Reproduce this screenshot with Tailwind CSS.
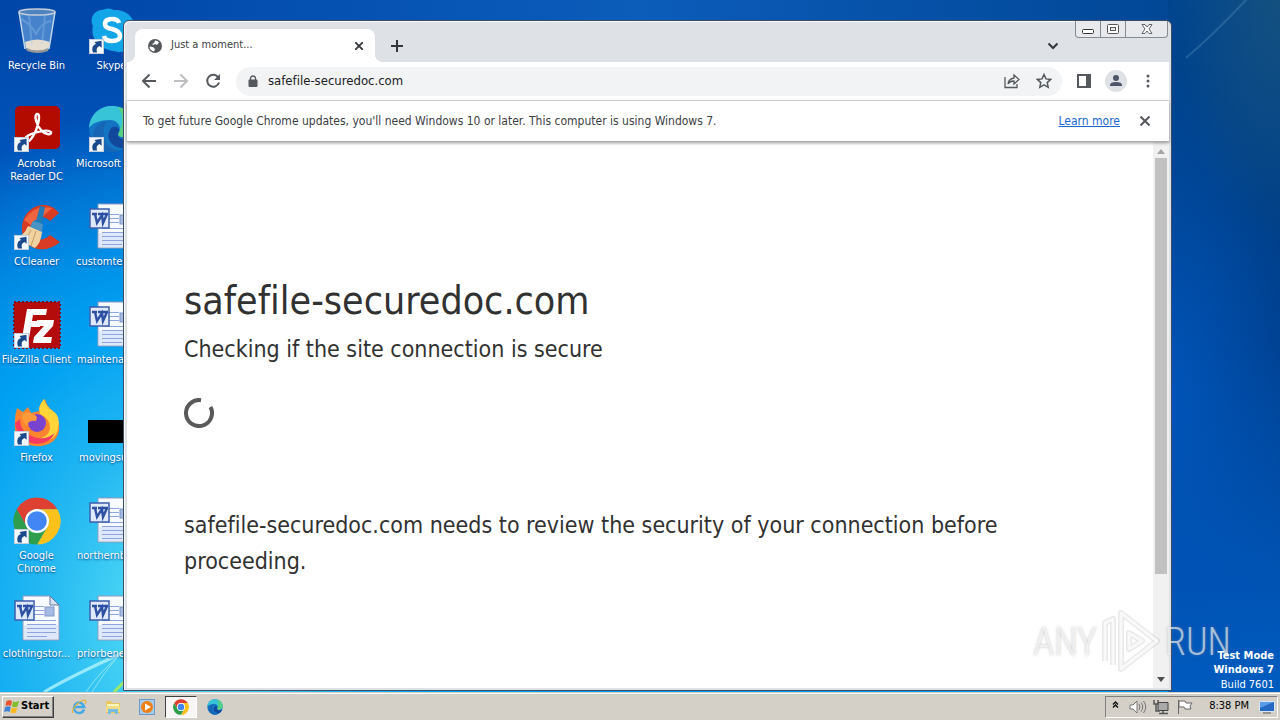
<!DOCTYPE html>
<html lang="en">
<head>
    <meta charset="UTF-8">
    <meta name="viewport" content="width=device-width, initial-scale=1.0">
    <title>Desktop</title>
    <script src="https://cdn.jsdelivr.net/npm/@tailwindcss/browser@4"></script>
</head>
<body class="h-screen flex flex-col overflow-hidden font-['DejaVu_Sans_Condensed','DejaVu_Sans',sans-serif] text-[11px] [font-variant-ligatures:none]">

    <!-- Shared icon shapes -->
    <svg class="hidden" aria-hidden="true">
        <symbol id="shortcut" viewBox="0 0 15 15">
            <rect x=".5" y=".5" width="14" height="14" fill="#f4f8ff" stroke="#c3cfdf"/>
            <path d="M4 13.500C2.500 9.500 3.500 6 7 5L5.500 3l7-1.200.2 7-2.200-1.700C8 8 7 10 8 13.500z" fill="#1b4a8c"/>
        </symbol>
        <symbol id="chrome" viewBox="0 0 48 48">
            <path d="M3.600 12.250A23.500 23.500 0 0 1 44.400 12.250H24A11.750 11.750 0 0 0 13.800 29.900z" fill="#de4032"/>
            <path d="M44.400 12.250A23.500 23.500 0 0 1 24 47.500L34.200 29.900A11.750 11.750 0 0 0 24 12.250z" fill="#fcc21b"/>
            <path d="M24 47.500A23.500 23.500 0 0 1 3.600 12.250L13.800 29.900A11.750 11.750 0 0 0 34.200 29.900z" fill="#2f9e4c"/>
            <circle cx="24" cy="24" r="12" fill="#fff"/>
            <circle cx="24" cy="24" r="9.800" fill="#4285f4"/>
        </symbol>
        <symbol id="edge" viewBox="0 0 48 48">
            <circle cx="24" cy="24" r="23" fill="#1474c4"/>
            <path d="M1 23C2 9 12 1 24 1c14 0 23 10 23 20 0 7-5 11-11 11-5 0-7-2-5-5 3-6-2-12-9-12C12 15 4 18 1 23z" fill="#38c4d8"/>
            <path d="M30 2c11 3 17 11 17 19 0 7-5 11-11 11-5 0-7-2-5-5 5-9 4-17-1-25z" fill="#55d080"/>
            <path d="M16 24c-3 12 6 21 16 22-10 3-21-1-26-11C3 27 8 17 20 16c-3 2-4 5-4 8z" fill="#1765b5"/>
            <path d="M31 27c-3 4 1 8 7 7 4 0 6-1 8-3-2 6-7 11-12 12-9 0-17-9-12-18 2-4 5-4 7-3 2 1 3 3 2 5z" fill="#12489c"/>
        </symbol>
        <symbol id="word" viewBox="0 0 48 48">
            <path d="M10 1h27l9 9v35H10z" fill="#f7faff" stroke="#8d9cbd"/>
            <path d="M11 30h34v14H11z" fill="#dfe7fb"/>
            <path d="M37 1v9h9z" fill="#d5dff2" stroke="#66779c"/>
            <path d="M20 11.500h11M20 15.500h11M20 19.500h11M14 25.500h29M14 29.500h29M14 33.500h29M14 37.500h29M14 41.500h20" stroke="#8ea4dc"/>
            <rect x="32" y="12" width="9" height="9" fill="#a5bbe4" stroke="#8097ca"/>
            <rect x="2" y="6" width="19" height="19" fill="#dfe9fb" stroke="#3b5eae" stroke-width="1.500"/>
            <path d="M4 11h5M10 11h4M15 11h5M7 11l2 9 5-8 1 8 4-9" fill="none" stroke="#2d50a5" stroke-width="2.400"/>
        </symbol>
    </svg>

    <main class="relative flex-1 overflow-hidden text-white bg-[radial-gradient(ellipse_420px_520px_at_190px_620px,#62e8f6_0%,#25b9f2_35%,#00a0f2_60%,transparent_100%),linear-gradient(to_bottom,#0045a6_0%,#0052b8_20%,#0074d6_45%,#0092e8_70%,#009cf0_100%)]">
        <div class="absolute top-0 inset-x-0 h-6 bg-linear-to-r from-[#0045a8] via-[#0c5cba] to-[#00438f]"></div>
        <div class="absolute inset-y-0 right-0 w-[112px] bg-[radial-gradient(ellipse_110px_240px_at_100%_0%,#14507f_0%,transparent_100%),radial-gradient(ellipse_130px_330px_at_0%_400px,#0054b8_0%,transparent_100%),linear-gradient(to_bottom,#00458f_0%,#003f88_30%,#00408f_50%,#0050ae_78%,#005cc0_100%)]"></div>
        <svg class="absolute bottom-0 left-0 w-36 h-32" viewBox="0 0 144 128" fill="none">
            <path d="M44 128Q84 105 144 80" stroke="#baf7ff" stroke-width="3" opacity=".75"/>
            <path d="M86 128Q99 108 124 88M92 128Q103 110 118 92" stroke="#9deaf2" opacity=".8"/>
            <path d="M114 128L128 114" stroke="#9be86c" stroke-width="3"/>
        </svg>
        <svg class="absolute top-0 right-0 w-[108px] h-24" viewBox="0 0 108 96">
            <path d="M74 0Q42 34 14 58" fill="none" stroke="#5b91bd" stroke-width="2" opacity=".35"/>
        </svg>

        <!-- Desktop icons -->
        <div class="relative grid grid-flow-col grid-rows-[repeat(7,98px)] auto-cols-[75px] w-[150px] pt-[7px] leading-[13px] [&>button]:flex [&>button]:flex-col [&>button]:gap-1 [&_svg]:size-12 [&_svg]:shrink-0 [&_svg]:mx-[13px] [&_span]:w-[73px] [&_span]:whitespace-nowrap [&_span]:[text-shadow:0_1px_2px_#003b80]">
            <button>
                <svg viewBox="0 0 48 48">
                    <path d="M6 4l6 38q12 6 24 0l6-38z" fill="#80b4e8" opacity=".55"/>
                    <path d="M12 35q12-5 25 0l-1 6q-12 6-23 0z" fill="#e5ddd0"/>
                    <path d="M13 41q11 5 23 0l-1 3q-10 4-21 0z" fill="#979895"/>
                    <path d="M16 8l3 30M32 8l-3 29M8 12q10 5 15 15 6-12 15-13" stroke="#a7cbed" stroke-width="2" fill="none" opacity=".3"/>
                    <path d="M6 5l6 37M42 5l-6 37" stroke="#bed7ec" stroke-width="1.500"/>
                    <ellipse cx="24" cy="5" rx="18" ry="3" fill="#4f83bf" stroke="#c4ceda" stroke-width="1.500"/>
                </svg>
                <span>Recycle Bin</span>
            </button>
            <button>
                <svg viewBox="0 0 48 48">
                    <rect x="2" y="1" width="45" height="43" rx="5" fill="#b30b00"/>
                    <path d="M12 34c1-5 22-11 26-7 1 4-7 2-10-2-5-5-7-15-4-16 5-1 0 18-6 25-3 4-7 4-6 0z" fill="none" stroke="#fff" stroke-width="2.400"/>
                    <use href="#shortcut" x="1" y="32" width="15" height="15"/>
                </svg>
                <span class="whitespace-normal!">Acrobat Reader DC</span>
            </button>
            <button>
                <svg viewBox="0 0 48 48">
                    <path d="M46 10l-9 8c-8-8-18-3-18 7 0 12 10 15 18 7l10 7C31 53 9 46 9 26 9 3 34-6 46 10z" fill="#d83b24"/>
                    <path d="M11 17Q21 1 39 5L27 16q-8 1-9 6z" fill="#ef6540"/>
                    <path d="M27 3l5 1-4 20-6-2z" fill="#217bb8"/>
                    <path d="M20 18l10 3-1 9-13-4z" fill="#4794c4"/>
                    <path d="M15 23l14 6q-1 11-7 16L2 35q9-2 13-12z" fill="#f0d2a0"/>
                    <path d="M18 27l-7 13M23 28l-5 15" stroke="#ca9a61"/>
                    <use href="#shortcut" x="1" y="32" width="15" height="15"/>
                </svg>
                <span>CCleaner</span>
            </button>
            <button>
                <svg viewBox="0 0 48 48">
                    <rect x="1" y="1" width="46" height="46" fill="#b40b0b"/>
                    <rect x="1" y="1" width="46" height="46" fill="none" stroke="#7d1020" stroke-width="2" stroke-dasharray="2 2"/>
                    <path d="M14 8h20l-1 6H20l-1 6h9l-1 6h-9l-2 11H9zM24 19h17l-1 6-10 11h9l-1 6H20l1-6 10-11h-8z" fill="#fff"/>
                    <use href="#shortcut" x="1" y="32" width="15" height="15"/>
                </svg>
                <span>FileZilla Client</span>
            </button>
            <button>
                <svg viewBox="0 0 48 48">
                    <path d="M4 9l6 4 5-5 3 6 8-2q0-7 6-12 2 8 8 12l2 4q5 7 4 15c-2 22-42 21-44 0Q1 18 4 9z" fill="#ff8430"/>
                    <path d="M31 0q-7 8-4 15 11 5 10 15-2 9-14 10 19 5 22-10 3-13-5-18-7-4-9-12z" fill="#ffd53a"/>
                    <path d="M2 24q2 19 22 21 12 0 18-11-13 10-27 1Q7 31 7 20z" fill="#f53b62"/>
                    <circle cx="24" cy="24" r="9" fill="#7843cf"/>
                    <path d="M9 14q10-2 15 4l-1 4q-8-1-9 5-6-5-5-13z" fill="#ff9a39"/>
                    <use href="#shortcut" x="1" y="32" width="15" height="15"/>
                </svg>
                <span>Firefox</span>
            </button>
            <button>
                <svg viewBox="0 0 48 48">
                    <use href="#chrome" width="48" height="48"/>
                    <use href="#shortcut" x="1" y="32" width="15" height="15"/>
                </svg>
                <span class="whitespace-normal!">Google Chrome</span>
            </button>
            <button>
                <svg><use href="#word"/></svg>
                <span>clothingstor...</span>
            </button>

            <button>
                <svg viewBox="0 0 48 48">
                    <path d="M14 3q7-3 12 0C44 2 52 20 45 33c-2 13-14 13-18 11C10 43 2 29 5 19 1 12 6 3 14 3z" fill="#12a5e8"/>
                    <path d="M31 16q-1-4-7-4-7 0-7 5 0 4 7 5 8 2 8 7 0 5-8 5-7 0-8-5" fill="none" stroke="#fff" stroke-width="4.500"/>
                    <use href="#shortcut" x="1" y="32" width="15" height="15"/>
                </svg>
                <span>Skype</span>
            </button>
            <button class="text-left">
                <svg viewBox="0 0 48 48">
                    <use href="#edge" width="48" height="48"/>
                    <use href="#shortcut" x="1" y="32" width="15" height="15"/>
                </svg>
                <span class="pl-px">Microsoft</span>
            </button>
            <button class="text-left"><svg><use href="#word"/></svg><span class="pl-px">customtes</span></button>
            <button class="text-left"><svg><use href="#word"/></svg><span class="pl-0.5">maintenan</span></button>
            <button class="text-left">
                <svg viewBox="0 0 48 48"><path d="M0 21h48v23H0z"/></svg>
                <span class="pl-1">movingsu</span>
            </button>
            <button class="text-left"><svg><use href="#word"/></svg><span class="pl-0.5">northernb</span></button>
            <button class="text-left"><svg><use href="#word"/></svg><span class="pl-0.5">priorbene</span></button>
        </div>

        <!-- Browser window -->
        <section class="absolute left-[123px] right-[108px] top-5 bottom-px flex flex-col rounded-t-md border border-[#3b4e66] bg-[#dee1e6] pr-0.5 pl-[3px] pb-0.5 text-[#3c4043] shadow-[inset_1px_1px_0_#f7f8fa]">
            <header class="flex h-[41px] shrink-0 items-end pl-2">
                <div class="relative flex h-[33px] w-60 items-center rounded-t-lg bg-white px-3 before:absolute before:bottom-0 before:-left-2 before:size-2 before:bg-[radial-gradient(circle_at_0_0,transparent_8px,white_8px)] after:absolute after:bottom-0 after:-right-2 after:size-2 after:bg-[radial-gradient(circle_at_100%_0,transparent_8px,white_8px)]">
                    <svg class="size-4" viewBox="0 0 16 16">
                        <circle cx="8" cy="8" r="7" fill="#55595e"/>
                        <path d="M2.500 8.500l3.500.5 2 2-1 2.500C4 13 2.500 11 2.500 8.500zM8 2.500q3 0 4 2L10 7 8 6 6.500 7 5 6l2-1z" fill="#fff"/>
                    </svg>
                    <span class="ml-2 flex-1 text-[11px]">Just a moment...</span>
                    <button aria-label="Close tab"><svg class="size-2" viewBox="0 0 8 8"><path d="M0 0l8 8M8 0L0 8" stroke="#34373b" stroke-width="1.800"/></svg></button>
                </div>
                <button aria-label="New tab" class="mb-2.5 ml-4"><svg class="size-3" viewBox="0 0 12 12"><path d="M6 0v12M0 6h12" stroke="#34373b" stroke-width="2"/></svg></button>
                <button aria-label="Search tabs" class="mb-3 ml-auto mr-[17px]"><svg class="h-2 w-2.5" viewBox="0 0 10 8"><path d="M.5 1.500L5 6l4.500-4.500" fill="none" stroke="#34373b" stroke-width="2"/></svg></button>
                <div class="mr-px flex h-[17px] self-start rounded-b-sm border border-t-0 border-[#858a93] bg-[#e7e9ed] [&>button]:flex [&>button]:items-center [&>button]:justify-center">
                    <button aria-label="Minimize" class="w-[25px] border-r border-[#858a93]"><svg class="h-3 w-3" viewBox="0 0 12 12"><rect x=".5" y="6.500" width="11" height="4" rx="1" fill="#fff" stroke="#333"/></svg></button>
                    <button aria-label="Maximize" class="w-[25px] border-r border-[#858a93]"><svg class="h-3 w-3" viewBox="0 0 12 12"><rect x=".5" y="1.500" width="11" height="9" rx="1" fill="#fff" stroke="#555"/><rect x="3.500" y="4.500" width="5" height="3" fill="#e7e9ed" stroke="#555"/></svg></button>
                    <button aria-label="Close" class="w-[41px]"><svg class="h-3 w-3" viewBox="0 0 12 12"><path d="M1 1.500h3l2 2.500 2-2.500h3L8 6l3 4.500H8L6 8l-2 2.500H1L4 6z" fill="#fff" stroke="#606570"/></svg></button>
                </div>
            </header>

            <div class="flex h-[39px] shrink-0 items-center border-b border-[#d5d8dc] bg-white pr-[18px] pl-3.5">
                <div class="flex gap-4 [&_svg]:size-4">
                    <button aria-label="Back"><svg viewBox="0 0 16 16" fill="none" stroke="#55595e" stroke-width="2"><path d="M15 8H2M8.500 1.500L2 8l6.500 6.500"/></svg></button>
                    <button aria-label="Forward"><svg viewBox="0 0 16 16" fill="none" stroke="#bcbec1" stroke-width="2"><path d="M1 8h13M7.500 1.500L14 8l-6.500 6.500"/></svg></button>
                    <button aria-label="Reload"><svg viewBox="0 0 16 16"><path d="M13.300 4.500A6 6 0 1 0 14 9.500" fill="none" stroke="#55595e" stroke-width="2"/><path d="M15 1v6H9z" fill="#55595e"/></svg></button>
                </div>
                <div class="ml-[15px] flex h-[29px] flex-1 items-center rounded-full bg-[#f1f3f4] pr-2.5 pl-3">
                    <svg class="h-3 w-2.5" viewBox="0 0 10 12"><rect x=".5" y="4.500" width="9" height="7.500" rx="1" fill="#55595e"/><path d="M2.500 5V3.500a2.500 2.500 0 0 1 5 0V5" fill="none" stroke="#55595e" stroke-width="1.400"/></svg>
                    <input type="text" aria-label="Address" value="safefile-securedoc.com" class="ml-2.5 min-w-0 flex-1 bg-transparent text-[13px] text-[#202124] outline-none">
                    <button aria-label="Share"><svg class="size-4" viewBox="0 0 16 16" fill="none" stroke="#55595e" stroke-width="1.300"><path d="M1 4v10.500h12V11M4 11q.5-5 6-6V2l5 4.500L10 11V8q-4-.2-6 3z"/></svg></button>
                    <button aria-label="Bookmark" class="ml-4"><svg class="size-4" viewBox="0 0 16 16"><path d="M8 1.500l2 4.400 4.700.5-3.500 3.200 1 4.700L8 11.900l-4.200 2.400 1-4.700L1.300 6.400 6 5.900z" fill="none" stroke="#55595e" stroke-width="1.500"/></svg></button>
                </div>
                <button aria-label="Side panel" class="ml-[15px]"><svg class="h-3.5 w-3.5" viewBox="0 0 14 14"><rect x="1" y="1" width="12" height="12" fill="#fff" stroke="#55595e" stroke-width="2"/><path d="M9 1h4v12H9z" fill="#55595e"/></svg></button>
                <button aria-label="Profile" class="ml-3.5"><svg class="size-[22px]" viewBox="0 0 22 22"><circle cx="11" cy="11" r="11" fill="#dee1e6"/><circle cx="11" cy="8" r="3" fill="#4d5667"/><path d="M5 16v-1q0-3 6-3t6 3v1z" fill="#4d5667"/></svg></button>
                <button aria-label="Menu" class="ml-[18px]"><svg class="h-4 w-1.5" viewBox="0 0 6 16" fill="#55595e"><circle cx="3" cy="3" r="1.500"/><circle cx="3" cy="8" r="1.500"/><circle cx="3" cy="13" r="1.500"/></svg></button>
            </div>

            <div class="relative flex h-[41px] shrink-0 items-center border-b border-[#aeb0b3] bg-white px-4 text-[12px] shadow-[0_1px_3px_#0006]">
                <p class="flex-1">To get future Google Chrome updates, you'll need Windows 10 or later. This computer is using Windows 7.</p>
                <a href="#" class="text-[#1a67d2] underline">Learn more</a>
                <button aria-label="Dismiss" class="ml-5 mr-[3px]"><svg class="size-2.5" viewBox="0 0 10 10"><path d="M.5.5l9 9M9.500.5l-9 9" stroke="#55595e" stroke-width="2"/></svg></button>
            </div>

            <div class="flex min-h-0 flex-1 bg-white">
                <article class="flex-1 overflow-hidden pt-[129px] text-[#313131]">
                    <div class="mx-auto max-w-[960px] px-6">
                        <h1 class="text-[39px] leading-[60px]">safefile-securedoc.com</h1>
                        <h2 class="text-[23px] leading-9">Checking if the site connection is secure</h2>
                        <svg class="mt-[31px] size-[30px]" viewBox="0 0 30 30"><path d="M17 2.200A13 13 0 1 0 26.500 9" fill="none" stroke="#595959" stroke-width="4"/></svg>
                        <p class="mt-[79px] text-[23px] leading-9">safefile-securedoc.com needs to review the security of your connection before proceeding.</p>
                    </div>
                </article>
                <div class="flex w-4 shrink-0 flex-col items-center bg-[#f1f1f1]">
                    <svg class="mt-[7px] h-[5px] w-2" viewBox="0 0 8 5"><path d="M0 5l4-5 4 5z" fill="#a3a3a3"/></svg>
                    <div class="mt-1 w-3 basis-[416px] bg-[#c1c1c1]"></div>
                    <svg class="mt-auto mb-1.5 h-[5px] w-2 shrink-0" viewBox="0 0 8 5"><path d="M0 0l4 5 4-5z" fill="#505050"/></svg>
                </div>
            </div>
        </section>

        <!-- Watermark over the window -->
        <div class="absolute right-[49px] bottom-[18px] flex items-center gap-1 font-['Roboto_Condensed_Light','Roboto_Condensed','Open_Sans_Condensed',sans-serif] text-[38px] leading-none text-white/60 [text-shadow:0_0_3px_#8888]">
            <span>ANY</span>
            <svg class="h-16 w-[60px]" viewBox="0 0 60 64" fill="none" stroke-linejoin="round">
                <g stroke="#999" stroke-opacity=".22" stroke-width="6"><path d="M20 3l36 28-36 28zM4 51V13l8-4v46M28 23l13 8-13 8z"/></g>
                <g stroke="#fbfbfb" stroke-opacity=".85" stroke-width="3"><path d="M20 3l36 28-36 28zM4 51V13l8-4v46M28 23l13 8-13 8z"/></g>
            </svg>
            <span>RUN</span>
        </div>
        <div class="absolute right-1.5 bottom-0 text-right leading-[15px]">
            <p class="font-bold leading-[14px]">Test Mode<br>Windows 7</p>
            <p>Build 7601</p>
        </div>
    </main>

    <!-- Taskbar -->
    <footer class="flex h-7 shrink-0 items-center border-t border-[#d4d0c8] bg-[#d4d0c8] px-0.5 text-black shadow-[inset_0_1px_0_#fff]">
        <button class="flex h-[22px] w-[52px] items-center gap-px border border-t-white border-r-[#404040] border-b-[#404040] border-l-white pl-px font-bold shadow-[inset_-1px_-1px_0_#808080]">
            <svg class="size-4 shrink-0" viewBox="0 0 16 16">
                <path d="M2.500 2q3-1.500 5.500 0L7 7Q4 5.500 1.500 7z" fill="#e9522c"/>
                <path d="M9 2.500q3 1 6-.5l-1.500 5.500q-3 1.500-5.500 0z" fill="#7fbd2b"/>
                <path d="M1.200 8q3-1.500 5.500 0l-1 5Q3 11.500 0 13z" fill="#3f83d8"/>
                <path d="M7.500 8.500q3 1.300 5.800 0L12 13.500q-3 1.500-5.500 0z" fill="#fbb91e"/>
            </svg>
            Start
        </button>
        <nav class="ml-[9px] flex items-center gap-0.5 [&>button]:flex [&>button]:h-[22px] [&>button]:w-8 [&>button]:items-center [&>button]:justify-center [&_svg]:size-4">
            <button aria-label="Internet Explorer"><svg viewBox="0 0 16 16" fill="none"><path d="M13 10.500A5.200 5.200 0 1 1 13.200 8H4" stroke="#45a9e3" stroke-width="2.500"/><path d="M2 14C-1 12 7 2 13 1q3 0 1 4" stroke="#e4b43c" stroke-width="1.200"/></svg></button>
            <button aria-label="Explorer"><svg viewBox="0 0 16 16"><path d="M1 2h5l1 2h8v10H1z" fill="#e7c65e"/><path d="M2 5h12v4H2z" fill="#fff4bd"/><path d="M1 7h14v6H1z" fill="#f3dc86"/><path d="M3 10h10v5h-3v-2H6v2H3z" fill="#76bde1"/></svg></button>
            <button aria-label="Media Player"><svg viewBox="0 0 16 16"><rect x=".5" y=".5" width="15" height="15" fill="#a7cbea" stroke="#6c9ac4"/><circle cx="8" cy="8" r="6" fill="#ef8114"/><path d="M6 4.500l6 3.500-6 3.500z" fill="#fff"/></svg></button>
            <button aria-label="Google Chrome" class="border border-t-[#404040] border-r-white border-b-white border-l-[#404040] bg-[#f7f6f4]"><svg><use href="#chrome"/></svg></button>
            <button aria-label="Microsoft Edge"><svg><use href="#edge"/></svg></button>
        </nav>
        <div class="ml-auto flex h-[22px] items-center border border-t-[#808080] border-r-white border-b-white border-l-[#808080] pr-0.5 pl-1.5 [&_svg]:h-4">
            <button aria-label="Show hidden icons"><svg class="w-[7px]" viewBox="0 0 7 16" fill="none" stroke="#111" stroke-width="1.500"><path d="M1 5.500L3.500 3 6 5.500M1 8.500L3.500 6 6 8.500"/></svg></button>
            <svg class="ml-2.5 w-[18px]" viewBox="0 0 18 16" fill="none" stroke="#777"><path d="M1 6h3l4-4v12l-4-4H1z" fill="#fff"/><path d="M10 5q2 3 0 6M12 3.500q3.500 4.500 0 9M14.500 2q4.500 6 0 12"/></svg>
            <svg class="ml-1.5 w-4" viewBox="0 0 16 16" fill="none" stroke="#555"><path d="M5 3.500h10v8H5z" fill="#aaa" stroke="#444"/><path d="M1 1v4h4V1M3 5v7h4M6 14.500h9M10 12v2" stroke-width="1.500"/></svg>
            <svg class="ml-2 w-4" viewBox="0 0 16 16" fill="#fff" stroke="#666"><path d="M1.500 1v14M2 2h6l1 2h6l-2 3 1 3H8L7 8H2z"/></svg>
            <time class="ml-4 whitespace-nowrap">8:38 PM</time>
            <button aria-label="Show desktop" class="ml-2.5"><svg class="w-4" viewBox="0 0 16 16"><path d="M.5 2.500h15v10H.5z" fill="#2469c4" stroke="#d7e5f4"/><path d="M1 3h14L1 9z" fill="#5c9be8"/><path d="M4 14h8" stroke="#555"/></svg></button>
        </div>
    </footer>
</body>
</html>
